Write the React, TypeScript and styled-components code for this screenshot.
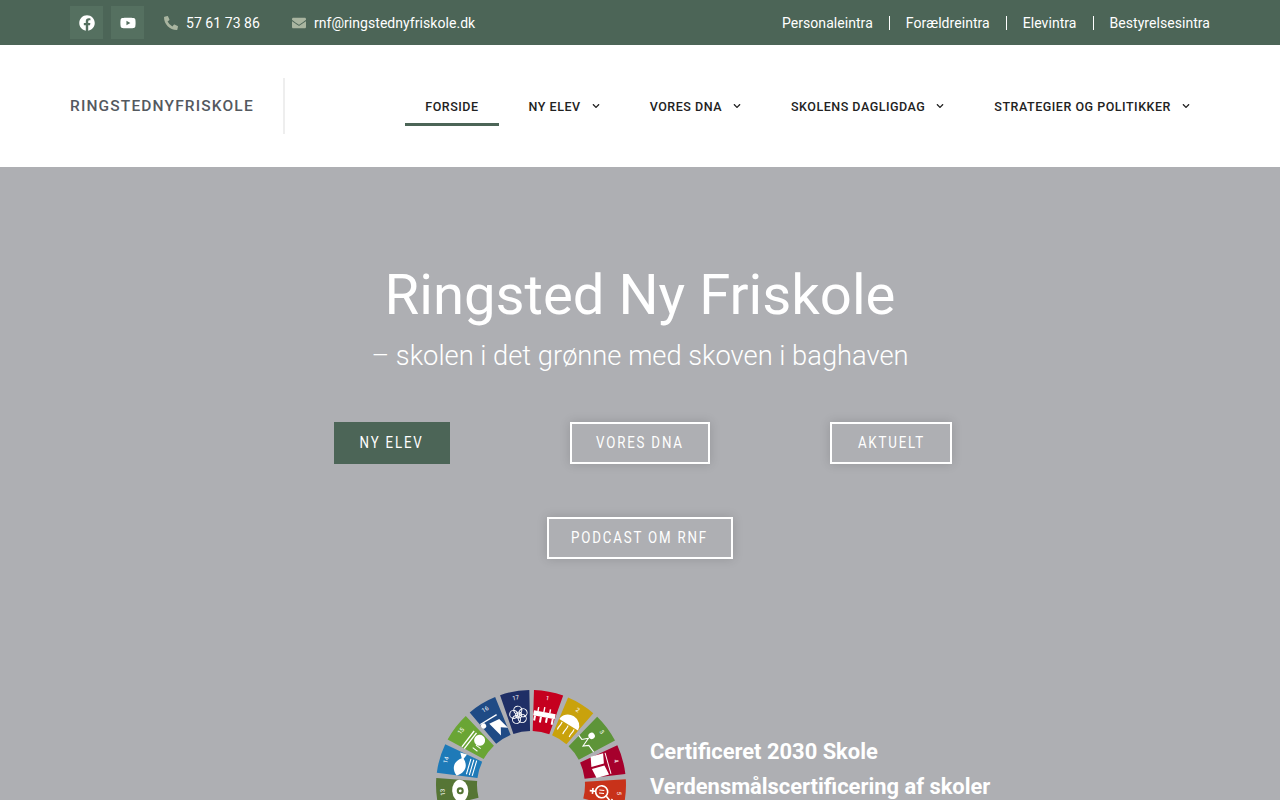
import React from 'react'
import styled, { createGlobalStyle } from 'styled-components'
import { FaChevronDown, FaEnvelope, FaFacebook, FaPhoneAlt, FaYoutube } from 'react-icons/fa'

const GlobalStyle = createGlobalStyle`
  html, body {
    margin: 0;
    padding: 0;
    height: 100%;
    overflow: hidden;
    font-family: Roboto, "Liberation Sans", sans-serif;
  }
`

const intraLinks = ['Personaleintra', 'Forældreintra', 'Elevintra', 'Bestyrelsesintra']
const navItems = [
  { label: 'FORSIDE', active: true },
  { label: 'NY ELEV', caret: true },
  { label: 'VORES DNA', caret: true },
  { label: 'SKOLENS DAGLIGDAG', caret: true },
  { label: 'STRATEGIER OG POLITIKKER', caret: true },
]

// wheel goes clockwise from the top, angles in degrees
const STEP = 360 / 17
const segments = [
  { n: '1', color: '#c5001f', from: 1.8, icon: 'people' },
  { n: '2', color: '#c9a20c', from: 1.8 + STEP, icon: 'jelly' },
  { n: '3', color: '#5d9438', from: 1.8 + STEP * 2, icon: 'pulse' },
  { n: '4', color: '#a6002c', from: 1.8 + STEP * 3, icon: 'book' },
  { n: '5', color: '#c8321a', from: 1.8 + STEP * 4, icon: 'gender' },
  { n: '13', color: '#567535', from: 341 - STEP * 4, icon: 'eye' },
  { n: '14', color: '#1e7ab8', from: 341 - STEP * 3, icon: 'fish' },
  { n: '15', color: '#6aa534', from: 341 - STEP * 2, icon: 'tree' },
  { n: '16', color: '#1f4b85', from: 341 - STEP, icon: 'dove' },
  { n: '17', color: '#1f2f66', from: 341, icon: 'flower' },
]

const CX = 100
const CY = 100
const OUTER = 95
const INNER = 54

const polar = (r: number, deg: number) => {
  const a = ((deg - 90) * Math.PI) / 180
  return [CX + r * Math.cos(a), CY + r * Math.sin(a)]
}

const sector = (from: number) => {
  const to = from + 18
  const [x1, y1] = polar(OUTER, from)
  const [x2, y2] = polar(OUTER, to)
  const [x3, y3] = polar(INNER, to)
  const [x4, y4] = polar(INNER, from)
  return `M${x1} ${y1}A${OUTER} ${OUTER} 0 0 1 ${x2} ${y2}L${x3} ${y3}A${INNER} ${INNER} 0 0 0 ${x4} ${y4}Z`
}

const SegmentIcon = ({ name }: { name: string }) => {
  switch (name) {
    case 'people':
      return (
        <g fill="#fff">
          <rect x="-11" y="-3" width="22" height="5" />
          <rect x="-10" y="2" width="2" height="5" />
          <rect x="-4" y="2" width="2" height="6" />
          <rect x="2" y="2" width="2" height="5" />
          <rect x="8" y="2" width="2" height="6" />
          <path d="M-7 -3v-4M-1 -3v-5M5 -3v-4" stroke="#fff" strokeWidth="1.4" />
        </g>
      )
    case 'jelly':
      return (
        <g>
          <path d="M-11 0a11 10 0 0 1 22 0z" fill="#fff" />
          <path d="M-7 1c1 4-1 5 0 9M0 1c1 4-1 6 0 10M7 1c1 4-1 5 0 9" stroke="#fff" strokeWidth="1.2" fill="none" />
        </g>
      )
    case 'pulse':
      return (
        <g>
          <path d="M-11 3h5l3-6 3 9 3-5h8" stroke="#fff" strokeWidth="1.1" fill="none" />
          <circle cx="-3" cy="-7" r="3.2" fill="#fff" />
        </g>
      )
    case 'book':
      return (
        <g>
          <path d="M-11 -7l10 2v13l-10-2zM11 -7l-10 2v13l10-2z" fill="#fff" />
          <path d="M-11 -9h22" stroke="#fff" strokeWidth="1" />
        </g>
      )
    case 'gender':
      return (
        <g stroke="#fff" fill="none" strokeWidth="1.6">
          <circle r="6" />
          <path d="M4 -5l6 -6M6 -11h4v4M0 6v6M-3 9h6" />
          <path d="M-1.5 -2.5v5M1.5 -2.5v5" strokeWidth="1" />
        </g>
      )
    case 'eye':
      return (
        <g>
          <ellipse rx="11" ry="8" fill="#fff" />
          <circle r="3.5" fill="#567535" />
          <circle r="1.4" fill="#fff" />
        </g>
      )
    case 'fish':
      return (
        <g>
          <path d="M-12 -3c5-7 13-7 18 0l5-3v7l-5-2c-5 6-13 6-18-2z" fill="#fff" />
          <path d="M-8 6h16M-8 9h16M-8 12h16" stroke="#fff" strokeWidth="1.1" />
        </g>
      )
    case 'tree':
      return (
        <g>
          <path d="M-12 -7h20M-12 -4h20" stroke="#fff" strokeWidth="1.4" />
          <circle cx="4" cy="3" r="5.5" fill="#fff" />
          <path d="M-6 2v6M-2 3v6" stroke="#fff" strokeWidth="1" />
        </g>
      )
    case 'dove':
      return (
        <g>
          <path d="M-12 -7h19" stroke="#fff" strokeWidth="1.4" />
          <circle cx="-10" cy="-4" r="2.6" fill="#fff" />
          <path d="M-4 -3l11 1 3 12-6-4-4 7z" fill="#fff" />
        </g>
      )
    default:
      return (
        <g stroke="#fff" fill="none" strokeWidth="1">
          <circle r="3" />
          {[0, 72, 144, 216, 288].map((a) => (
            <circle key={a} r="4" cy="-5" transform={`rotate(${a})`} />
          ))}
        </g>
      )
  }
}

const GoalsWheel = () => (
  <WheelSvg viewBox="0 0 200 200" aria-label="Verdensmål">
    {segments.map((s) => {
      const mid = s.from + 9
      const [ix, iy] = polar(71, mid)
      const [tx, ty] = polar(89, mid)
      return (
        <g key={s.n}>
          <path d={sector(s.from)} fill={s.color} />
          <g transform={`translate(${ix} ${iy}) rotate(${mid})`}>
            <SegmentIcon name={s.icon} />
          </g>
          <text
            x={tx}
            y={ty}
            fill="#fff"
            fontSize="6"
            fontFamily="Roboto, sans-serif"
            textAnchor="middle"
            dominantBaseline="central"
            transform={`rotate(${mid} ${tx} ${ty})`}
          >
            {s.n}
          </text>
        </g>
      )
    })}
  </WheelSvg>
)

export default function App() {
  return (
    <>
      <GlobalStyle />
      <Page>
        <TopBar>
          <TopLeft>
            <SocialIcons>
              <SocialIcon><FaFacebook /></SocialIcon>
              <SocialIcon><FaYoutube /></SocialIcon>
            </SocialIcons>
            <Contact><ContactIcon><FaPhoneAlt /></ContactIcon>57 61 73 86</Contact>
            <Contact><ContactIcon><FaEnvelope /></ContactIcon>rnf@ringstednyfriskole.dk</Contact>
          </TopLeft>
          <IntraList>
            {intraLinks.map((l) => (
              <IntraLink key={l}>{l}</IntraLink>
            ))}
          </IntraList>
        </TopBar>

        <Header>
          <Brand>RINGSTEDNYFRISKOLE</Brand>
          <Nav>
            {navItems.map((item) => (
              <NavItem key={item.label} $active={item.active}>
                {item.label}
                {item.caret && <FaChevronDown />}
              </NavItem>
            ))}
          </Nav>
        </Header>

        <Hero>
          <Title>Ringsted Ny Friskole</Title>
          <Subtitle>– skolen i det grønne med skoven i baghaven</Subtitle>
          <ButtonRow>
            <HeroButton $solid $width={116}><ButtonLabel>NY ELEV</ButtonLabel></HeroButton>
            <HeroButton $width={140}><ButtonLabel>VORES DNA</ButtonLabel></HeroButton>
            <HeroButton $width={122}><ButtonLabel>AKTUELT</ButtonLabel></HeroButton>
          </ButtonRow>
          <SingleRow>
            <HeroButton $width={186}><ButtonLabel>PODCAST OM RNF</ButtonLabel></HeroButton>
          </SingleRow>
          <Certificate>
            <GoalsWheel />
            <CertificateText>
              Certificeret 2030 Skole
              <br />
              Verdensmålscertificering af skoler
            </CertificateText>
          </Certificate>
        </Hero>
      </Page>
    </>
  )
}

const Page = styled.div`
  height: 800px;
  overflow: hidden;
`

const TopBar = styled.div`
  height: 45px;
  box-sizing: border-box;
  padding: 0 70px;
  background-color: #4c6557;
  color: #fff;
  display: flex;
  align-items: center;
  justify-content: space-between;
  font-size: 14px;
  letter-spacing: 0.05px;
`

const TopLeft = styled.div`
  display: flex;
  align-items: center;
`

const SocialIcons = styled.div`
  display: flex;
  gap: 8px;
  margin-right: 20px;
`

const SocialIcon = styled.span`
  width: 33px;
  height: 33px;
  background-color: #557060;
  display: flex;
  align-items: center;
  justify-content: center;
  font-size: 16px;
`

const Contact = styled.span`
  display: flex;
  align-items: center;
  margin-right: 32px;
`

const ContactIcon = styled.span`
  display: flex;
  color: #a9b5a0;
  font-size: 14px;
  margin-right: 8px;
`

const IntraList = styled.div`
  display: flex;
  align-items: center;
`

const IntraLink = styled.span`
  padding: 0 16px;
  line-height: 14px;
  border-left: 1px solid #fff;

  &:first-child {
    border-left: 0;
  }
  &:last-child {
    padding-right: 0;
  }
`

const Header = styled.header`
  height: 122px;
  box-sizing: border-box;
  padding: 0 70px;
  background-color: #fff;
  display: flex;
  align-items: center;
  justify-content: space-between;
`

const Brand = styled.div`
  width: 215px;
  height: 56px;
  box-sizing: border-box;
  border-right: 2px solid #eeeeee;
  display: flex;
  align-items: center;
  font-size: 15.5px;
  font-weight: 500;
  letter-spacing: 1.15px;
  color: #54595f;
`

const Nav = styled.nav`
  display: flex;
  align-items: center;
`

const NavItem = styled.a<{ $active?: boolean }>`
  height: 40px;
  box-sizing: border-box;
  padding: 3px 20px 0;
  margin-left: ${(p) => (p.$active ? '0' : '10px')};
  display: flex;
  align-items: center;
  gap: 11px;
  font-size: 12.5px;
  font-weight: 500;
  letter-spacing: 0.52px;
  color: #222;
  white-space: nowrap;
  border-bottom: 3px solid ${(p) => (p.$active ? '#4c6557' : 'transparent')};

  svg {
    width: 8px;
    height: 8px;
  }
`

const Hero = styled.main`
  height: 633px;
  box-sizing: border-box;
  padding-top: 93px;
  background-color: #aeafb3;
  color: #fff;
  display: flex;
  flex-direction: column;
  align-items: center;
`

const Title = styled.h1`
  margin: 0;
  font-size: 56.25px;
  line-height: 70px;
  font-weight: 400;
`

const Subtitle = styled.h2`
  margin: 8px 0 0;
  font-size: 27.3px;
  line-height: 36px;
  font-weight: 300;
`

const ButtonRow = styled.div`
  margin: 48px 0 0 6px;
  display: flex;
  gap: 120px;
`

const SingleRow = styled.div`
  margin-top: 53px;
`

const HeroButton = styled.a<{ $solid?: boolean; $width: number }>`
  width: ${(p) => p.$width}px;
  height: 42px;
  box-sizing: border-box;
  padding-bottom: 2px;
  display: flex;
  align-items: center;
  justify-content: center;
  white-space: nowrap;
  color: #fff;
  background-color: ${(p) => (p.$solid ? '#4c6557' : 'transparent')};
  border: 2px solid ${(p) => (p.$solid ? '#4c6557' : '#fff')};
  box-shadow: ${(p) => (p.$solid ? 'none' : '0 0 10px rgba(0, 0, 0, 0.15)')};
`

// the reference face is a condensed one, Roboto squeezed comes closest
const ButtonLabel = styled.span`
  display: inline-block;
  font-size: 16px;
  letter-spacing: 2.2px;
  transform: scaleX(0.83);
`

const Certificate = styled.div`
  width: 560px;
  margin: 126px 0 0 142px;
  display: flex;
  align-items: flex-start;
`

const WheelSvg = styled.svg`
  width: 200px;
  height: 200px;
  flex-shrink: 0;
`

const CertificateText = styled.div`
  margin: 49px 0 0 19px;
  font-size: 21.9px;
  line-height: 35px;
  font-weight: 700;
  white-space: nowrap;
`
